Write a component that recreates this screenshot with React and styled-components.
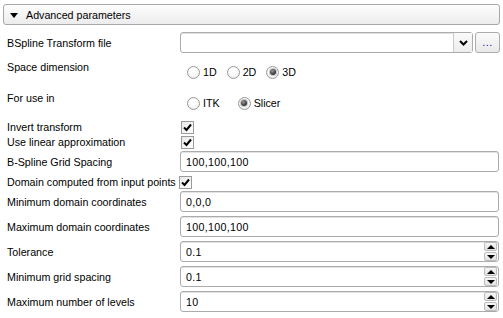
import React from "react";
import styled, { createGlobalStyle, css } from "styled-components";

const GlobalStyle = createGlobalStyle`
  html, body {
    margin: 0;
    padding: 0;
    background: #ffffff;
  }
  body {
    font-family: "Liberation Sans", Arial, sans-serif;
    font-size: 10.7px;
    color: #000000;
  }
`;

const Panel = styled.div`
  width: 503px;
  height: 318px;
  box-sizing: border-box;
  padding: 4px 3px 0 3px;
  display: flex;
  flex-direction: column;
`;

const Header = styled.div`
  height: 21px;
  box-sizing: border-box;
  border: 1px solid #a7a7a7;
  border-radius: 3px;
  background: linear-gradient(#fdfdfd, #ececec);
  display: flex;
  align-items: center;
  padding-left: 6px;
  gap: 8px;
`;

const DownTriangle = styled.span`
  width: 0;
  height: 0;
  border-left: 4px solid transparent;
  border-right: 4px solid transparent;
  border-top: 5px solid #000;
  margin-top: 1px;
`;

const Form = styled.div`
  margin-top: 7px;
  padding-left: 4px;
  display: flex;
  flex-direction: column;
`;

const Row = styled.div`
  display: grid;
  grid-template-columns: 173px 1fr;
  height: ${(p) => p.$h}px;
  margin-top: ${(p) => p.$mt || 0}px;
  align-items: ${(p) => (p.$top ? "start" : "center")};
`;

const Label = styled.div`
  line-height: 16px;
  white-space: nowrap;
  ${(p) =>
    p.$top &&
    css`
      padding-top: 3px;
    `}
`;

const fieldBox = css`
  height: 21px;
  box-sizing: border-box;
  border: 1px solid #ababab;
  border-radius: 3px;
  background: #fff;
  box-shadow: inset 0 1px 0 #e3e3e3;
`;

const TextField = styled.div`
  ${fieldBox};
  margin-right: 1px;
  display: flex;
  align-items: center;
  padding-left: 5px;
  letter-spacing: 0.3px;
`;

const FileLine = styled.div`
  display: flex;
  gap: 2px;
  height: 21px;
`;

const Combo = styled.div`
  ${fieldBox};
  flex: 1;
  display: flex;
  justify-content: flex-end;
`;

const ComboArrow = styled.div`
  width: 18px;
  border-left: 1px solid #c9c9c9;
  background: linear-gradient(#fafafa, #ededed);
  display: flex;
  align-items: center;
  justify-content: center;
`;

const DotsButton = styled.div`
  width: 25px;
  height: 21px;
  box-sizing: border-box;
  border: 1px solid #acacac;
  border-radius: 3px;
  background: linear-gradient(#fbfbfb, #e9e9e9);
  color: #1c1c8a;
  display: flex;
  align-items: center;
  justify-content: center;
  padding-bottom: 2px;
  letter-spacing: 0.5px;
`;

const RadioGroup = styled.div`
  display: flex;
  align-items: center;
  padding-top: 8px;
  padding-left: 7px;
`;

const RadioItem = styled.label`
  display: flex;
  align-items: center;
  gap: 3px;
  margin-right: ${(p) => p.$gap}px;
  line-height: 16px;
`;

const RadioCircle = styled.span`
  width: 13px;
  height: 13px;
  box-sizing: border-box;
  border-radius: 50%;
  border: 1px solid #9a9a9a;
  background: radial-gradient(circle at 50% 40%, #ffffff 30%, #e4e4e4 100%);
  display: flex;
  align-items: center;
  justify-content: center;
  ${(p) =>
    p.$checked &&
    css`
      &::after {
        content: "";
        width: 6px;
        height: 6px;
        border-radius: 50%;
        background: radial-gradient(circle at 40% 35%, #9a9a9a 0%, #3a3a3a 60%, #202020 100%);
        box-shadow: 0 0 0 1px #c5c5c5;
      }
    `}
`;

const CheckBox = styled.span`
  width: 13px;
  height: 13px;
  box-sizing: border-box;
  border: 1px solid #9a9a9a;
  background: linear-gradient(135deg, #e8e8e8, #ffffff);
  display: flex;
  align-items: center;
  justify-content: center;
  margin-left: ${(p) => p.$ml ?? 1}px;
`;

const SpinField = styled.div`
  ${fieldBox};
  margin-right: 1px;
  display: flex;
  align-items: center;
  padding-left: 5px;
  padding-right: 1px;
`;

const SpinValue = styled.div`
  flex: 1;
  letter-spacing: 0.3px;
`;

const SpinButtons = styled.div`
  width: 13px;
  height: 19px;
  display: flex;
  flex-direction: column;
  gap: 1px;
`;

const SpinButton = styled.div`
  flex: 1;
  box-sizing: border-box;
  border: 1px solid #bcbcbc;
  border-radius: 2px;
  background: linear-gradient(#f6f6f6, #e2e2e2);
  display: flex;
  align-items: center;
  justify-content: center;
`;

const Tri = styled.span`
  width: 0;
  height: 0;
  border-left: 4px solid transparent;
  border-right: 4px solid transparent;
  ${(p) =>
    p.$up
      ? css`
          border-bottom: 4px solid #000;
        `
      : css`
          border-top: 4px solid #000;
        `}
`;

const Check = () => (
  <svg width="9" height="9" viewBox="0 0 9 9">
    <path d="M1 4.5 L3.5 7 L8 1.5" fill="none" stroke="#000" strokeWidth="2" />
  </svg>
);

const Chevron = () => (
  <svg width="9" height="6" viewBox="0 0 9 6">
    <path d="M1 1 L4.5 4.5 L8 1" fill="none" stroke="#000" strokeWidth="2" />
  </svg>
);

const Spin = ({ value }) => (
  <SpinField>
    <SpinValue>{value}</SpinValue>
    <SpinButtons>
      <SpinButton>
        <Tri $up />
      </SpinButton>
      <SpinButton>
        <Tri />
      </SpinButton>
    </SpinButtons>
  </SpinField>
);

const App = () => {
  return (
    <>
      <GlobalStyle />
      <Panel>
        <Header>
          <DownTriangle />
          <span>Advanced parameters</span>
        </Header>
        <Form>
          <Row $h={21}>
            <Label>BSpline Transform file</Label>
            <FileLine>
              <Combo>
                <ComboArrow>
                  <Chevron />
                </ComboArrow>
              </Combo>
              <DotsButton>...</DotsButton>
            </FileLine>
          </Row>
          <Row $h={31} $mt={3} $top>
            <Label $top>Space dimension</Label>
            <RadioGroup>
              <RadioItem $gap={10}>
                <RadioCircle />
                1D
              </RadioItem>
              <RadioItem $gap={10}>
                <RadioCircle />
                2D
              </RadioItem>
              <RadioItem $gap={0}>
                <RadioCircle $checked />
                3D
              </RadioItem>
            </RadioGroup>
          </Row>
          <Row $h={31} $top>
            <Label $top>For use in</Label>
            <RadioGroup>
              <RadioItem $gap={18}>
                <RadioCircle />
                ITK
              </RadioItem>
              <RadioItem $gap={0}>
                <RadioCircle $checked />
                Slicer
              </RadioItem>
            </RadioGroup>
          </Row>
          <Row $h={15} $mt={1}>
            <Label>Invert transform</Label>
            <CheckBox>
              <Check />
            </CheckBox>
          </Row>
          <Row $h={15}>
            <Label>Use linear approximation</Label>
            <CheckBox>
              <Check />
            </CheckBox>
          </Row>
          <Row $h={21} $mt={2}>
            <Label>B-Spline Grid Spacing</Label>
            <TextField>100,100,100</TextField>
          </Row>
          <Row $h={16} $mt={2}>
            <Label>Domain computed from input points</Label>
            <CheckBox $ml={-1}>
              <Check />
            </CheckBox>
          </Row>
          <Row $h={21} $mt={1}>
            <Label>Minimum domain coordinates</Label>
            <TextField>0,0,0</TextField>
          </Row>
          <Row $h={21} $mt={4}>
            <Label>Maximum domain coordinates</Label>
            <TextField>100,100,100</TextField>
          </Row>
          <Row $h={21} $mt={4}>
            <Label>Tolerance</Label>
            <Spin value="0.1" />
          </Row>
          <Row $h={21} $mt={4}>
            <Label>Minimum grid spacing</Label>
            <Spin value="0.1" />
          </Row>
          <Row $h={21} $mt={4}>
            <Label>Maximum number of levels</Label>
            <Spin value="10" />
          </Row>
        </Form>
      </Panel>
    </>
  );
};

export default App;
